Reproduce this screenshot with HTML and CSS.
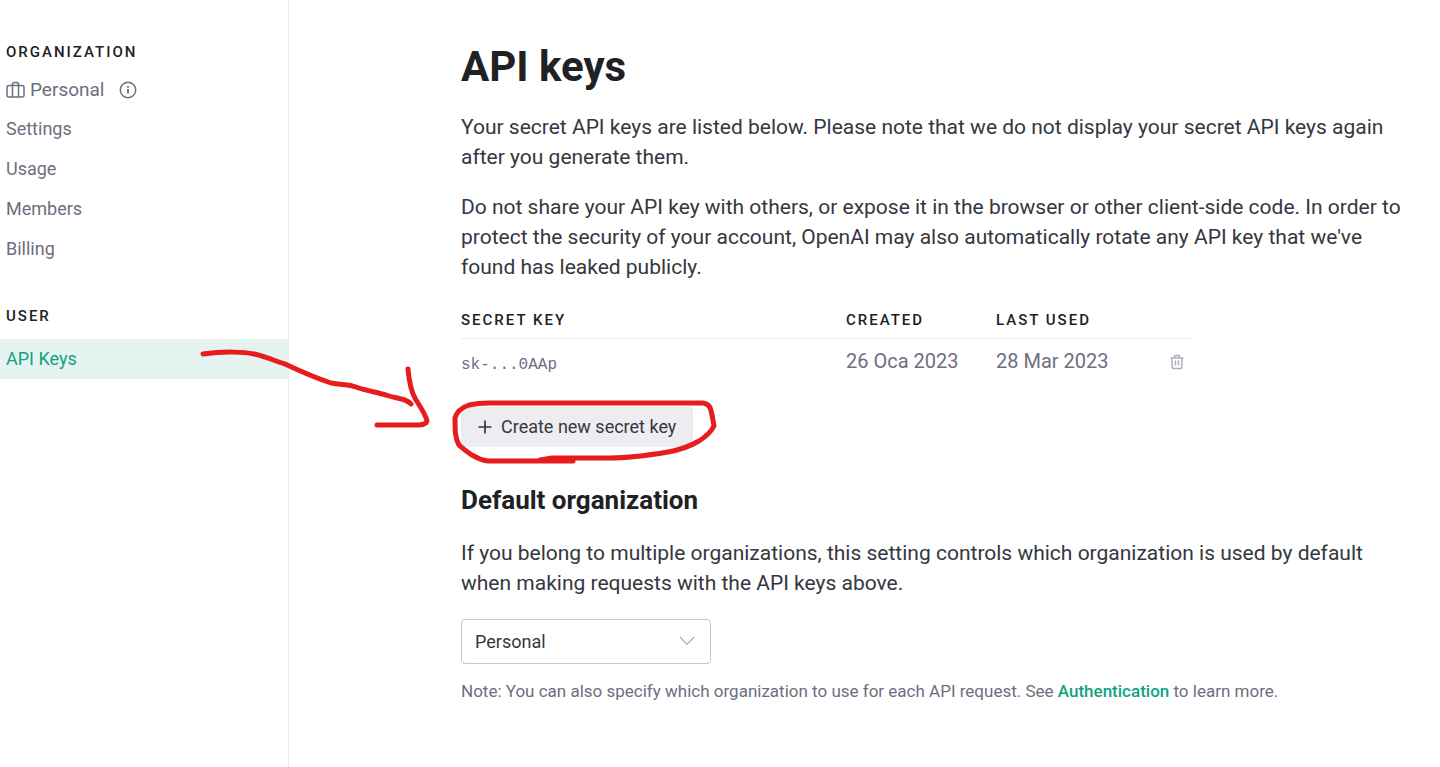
FILE: index.html
```html
<!DOCTYPE html>
<html lang="en">
<head>
    <meta charset="UTF-8">
    <meta name="viewport" content="width=device-width, initial-scale=1">
    <title>API keys</title>
    <link rel="stylesheet" href="styles.css">
</head>
<body>

<div class="page">
    <nav class="sidebar">
        <h2 class="nav-title">Organization</h2>
        <div class="org-name">
            <svg width="19" height="18" viewBox="0 0 19 18" fill="none" stroke="currentColor" stroke-width="1.5">
                <rect x="1" y="4.5" width="17" height="11.5" rx="2"/>
                <path d="M6.5 16V3.500a2 2 0 0 1 2-2h2a2 2 0 0 1 2 2V16"/>
            </svg>
            <span>Personal</span>
            <svg class="info" width="18" height="18" viewBox="0 0 18 18" fill="none" stroke="currentColor" stroke-width="1.5">
                <circle cx="9" cy="9" r="7.7"/>
                <path d="M9 8v4.500M9 5v1.700" stroke-width="1.8"/>
            </svg>
        </div>
        <a class="nav-link" href="#">Settings</a>
        <a class="nav-link" href="#">Usage</a>
        <a class="nav-link" href="#">Members</a>
        <a class="nav-link" href="#">Billing</a>

        <h2 class="nav-title nav-user">User</h2>
        <a class="nav-link active" href="#">API Keys</a>
    </nav>

    <main class="content">
        <h1>API keys</h1>
        <p>Your secret API keys are listed below. Please note that we do not display your secret API keys again after you generate them.</p>
        <p>Do not share your API key with others, or expose it in the browser or other client-side code. In order to protect the security of your account, OpenAI may also automatically rotate any API key that we've found has leaked publicly.</p>

        <table class="keys">
            <thead>
                <tr>
                    <th class="col-key">Secret key</th>
                    <th class="col-date">Created</th>
                    <th class="col-date">Last used</th>
                    <th></th>
                </tr>
            </thead>
            <tbody>
                <tr>
                    <td class="key">sk-...0AAp</td>
                    <td>26 Oca 2023</td>
                    <td>28 Mar 2023</td>
                    <td class="actions">
                        <button class="delete" type="button" aria-label="Delete key">
                            <svg width="14" height="16" viewBox="0 0 14 16" fill="none" stroke="currentColor" stroke-width="1.5">
                                <path d="M.5 4h13M4.500 4V2.500a1 1 0 0 1 1-1h3a1 1 0 0 1 1 1V4M1.800 4l.5 9.500a1 1 0 0 0 1 1h7.400a1 1 0 0 0 1-1L12.200 4M5.500 6.500v5M8.500 6.500v5"/>
                            </svg>
                        </button>
                    </td>
                </tr>
            </tbody>
        </table>

        <button class="create" type="button">
            <svg width="14" height="14" viewBox="0 0 14 14" fill="none" stroke="currentColor" stroke-width="1.7">
                <path d="M7 .5v13M.5 7h13"/>
            </svg>
            Create new secret key
        </button>

        <h2 id="org-title">Default organization</h2>
        <p>If you belong to multiple organizations, this setting controls which organization is used by default when making requests with the API keys above.</p>

        <div class="select">
            <select aria-labelledby="org-title">
                <option>Personal</option>
            </select>
            <svg width="16" height="10" viewBox="0 0 16 10" fill="none" stroke="currentColor" stroke-width="1.3">
                <path d="M.8 1L8 8.200 15.200 1"/>
            </svg>
        </div>

        <p class="note">Note: You can also specify which organization to use for each API request. See <a href="#">Authentication</a> to learn more.</p>
    </main>
</div>

<!-- hand drawn arrow and circle around the create button -->
<svg class="marker" width="720" height="470" viewBox="0 0 720 470">
    <path d="M203 354C224 351 245 352 254 354C267 357 275 361 285 364C302 372 319 379 331 383C342 385 349 384 356 387C367 391 376 392 386 395C397 399 406 398 411 404"/>
    <path d="M408 369C409 381 411 392 416 400C421 408 426 415 427 421C426 425 421 425 414 425L377 425"/>
    <path d="M573 461L488 461C475 459 466 451 459 445C455 438 455 430 455 418C457 411 463 407 469 405Q478 403 489 403L703 403C710 404 711 409 712 415L714 426C711 432 707 436 699 441C687 448 679 450 668 452C650 455 630 458 610 458L552 458L540 460"/>
</svg>

</body>
</html>
```
FILE: styles.css
```css
* { box-sizing: border-box; }
body { margin: 0; font-family: Roboto, "Liberation Sans", sans-serif; color: #353740; background: #fff; }
h1, h2, p { margin: 0; }
a { color: #10a37f; text-decoration: none; }
button, select { font-family: inherit; color: inherit; }

.page { display: flex; min-height: 100vh; }

.sidebar { flex: 0 0 289px; padding-top: 42px; border-right: 1px solid #ececf1; color: #6e6e80; }
.nav-title { padding-left: 6px; font-size: 15px; line-height: 20px; font-weight: 500; letter-spacing: 2px; text-transform: uppercase; color: #202123; }
.nav-user { margin: 37px 0 13px; }
.org-name { display: flex; align-items: center; gap: 5px; padding-left: 6px; margin: 14px 0 5px; font-size: 19px; line-height: 28px; }
.org-name .info { margin-left: 10px; }
.nav-link { display: block; padding-left: 6px; font-size: 18px; line-height: 40px; color: #6e6e80; }
.nav-link.active { background: #e5f3f1; color: #10a37f; }

.content { flex: 1; padding: 42px 30px 40px 172px; }
h1 { margin-bottom: 20px; font-size: 42px; line-height: 50px; font-weight: 700; color: #202123; }
.content p { margin-bottom: 20px; font-size: 21px; line-height: 30px; }

.keys { width: 100%; max-width: 733px; margin-top: 28px; border-collapse: collapse; table-layout: fixed; color: #6e6e80; }
.keys th { padding: 0 0 8px; border-bottom: 1px solid #ececf1; font-size: 15px; line-height: 20px; font-weight: 500; letter-spacing: 2px; text-align: left; text-transform: uppercase; color: #202123; }
.keys td { padding: 0; height: 45px; font-size: 20px; }
.keys .col-key { width: 385px; }
.keys .col-date { width: 150px; }
.keys .key { padding-top: 8px; font-family: "Liberation Mono", monospace; font-size: 16px; }
.keys .actions { padding: 4px 10px 0 0; text-align: right; }
.delete { display: inline-flex; padding: 0; border: 0; background: none; color: #acacbe; }

.create { display: flex; align-items: center; gap: 9px; height: 40px; margin: 23px 0 36px; padding: 0 17px; border: 0; border-radius: 4px; background: #ececf1; font-size: 18px; }

.content h2 { margin-bottom: 20px; font-size: 26px; line-height: 35px; font-weight: 700; color: #202123; }
.content .select { display: flex; align-items: center; width: 250px; height: 45px; margin: 21px 0 12px; border: 1px solid #c5c5d2; border-radius: 4px; }
.select select { flex: 1; height: 43px; margin-right: -32px; padding: 0 32px 0 13px; border: 0; background: none; appearance: none; font-size: 18px; }
.select svg { margin-right: 15px; color: #acacbe; pointer-events: none; }
.content .note { font-size: 17px; color: #6e6e80; }
.note a { font-weight: 500; }

.marker { position: absolute; top: 0; left: 0; fill: none; stroke: #e71d1d; stroke-width: 5px; stroke-linecap: round; stroke-linejoin: round; pointer-events: none; }
```
